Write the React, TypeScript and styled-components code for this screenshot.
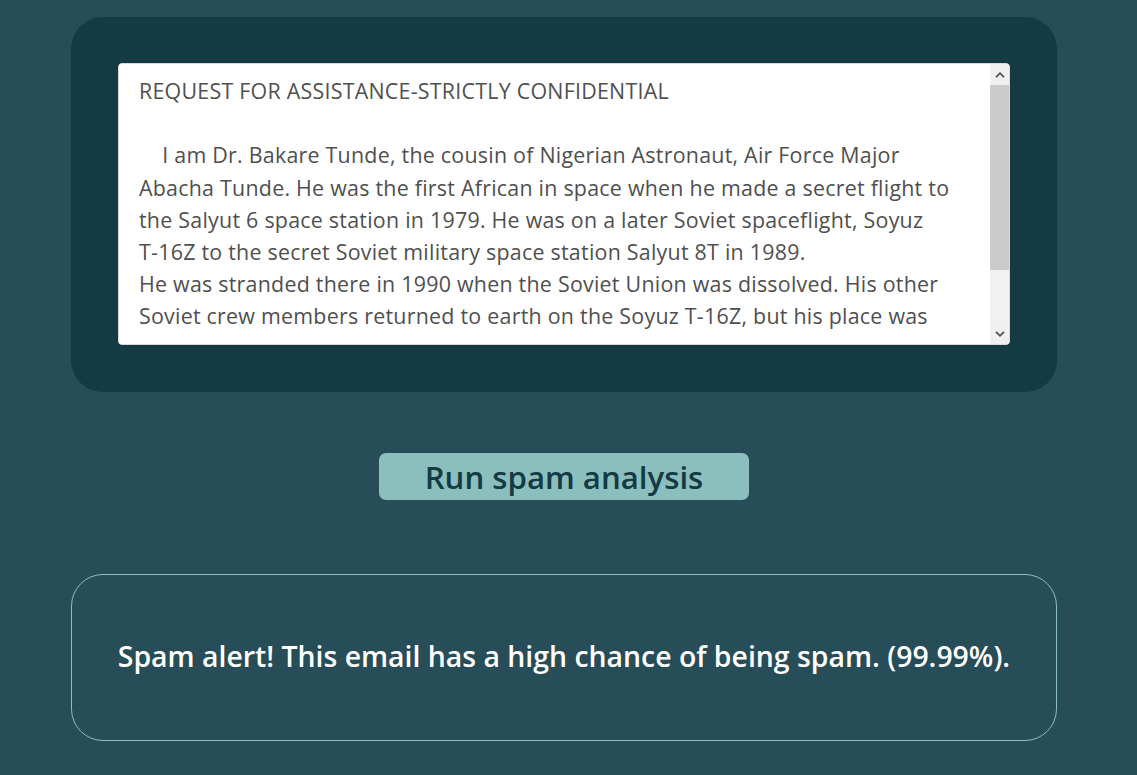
import React from "react";
import styled, { createGlobalStyle } from "styled-components";

const GlobalStyle = createGlobalStyle`
  html, body {
    margin: 0;
    padding: 0;
    background: #264d58;
  }
  body {
    font-family: "Open Sans", "Noto Sans", sans-serif;
  }
`;

const Page = styled.main`
  width: 986px;
  padding: 17px 0 34px 71px;
  display: flex;
  flex-direction: column;
  align-items: center;
`;

const InputPanel = styled.section`
  box-sizing: border-box;
  width: 100%;
  height: 375px;
  background: #143a43;
  border-radius: 32px;
  padding: 46px 47px 47px 47px;
  display: flex;
`;

const EditorFrame = styled.div`
  position: relative;
  width: 892px;
  height: 282px;

  &::after {
    content: "";
    position: absolute;
    left: 1px;
    right: 20px;
    bottom: 1px;
    height: 7px;
    background: #ffffff;
    border-bottom-left-radius: 3px;
    pointer-events: none;
  }
`;

const EmailArea = styled.textarea`
  box-sizing: border-box;
  display: block;
  width: 100%;
  height: 100%;
  resize: none;
  background: #ffffff;
  border: 1px solid #d9d9d9;
  border-radius: 4px;
  padding: 11px 41px 11px 20px;
  font-family: "Open Sans", "Noto Sans", sans-serif;
  font-size: 21.4px;
  letter-spacing: 0.25px;
  line-height: 32.2px;
  color: #4f4f4f;
  outline: none;
  overflow-y: hidden;
`;

const ScrollRail = styled.div`
  position: absolute;
  top: 1px;
  right: 1px;
  bottom: 1px;
  width: 19px;
  display: flex;
  flex-direction: column;
  background: #f1f1f1;
  border-top-right-radius: 3px;
  border-bottom-right-radius: 3px;
  overflow: hidden;
`;

const ScrollButton = styled.div`
  height: 21px;
  flex: none;
  display: flex;
  align-items: center;
  justify-content: center;
  background: #f0f0f0;
`;

const ScrollTrack = styled.div`
  flex: 1;
  display: flex;
  flex-direction: column;
`;

const ScrollThumb = styled.div`
  height: 185px;
  background: #cbcbcb;
`;

const Chevron = ({ up }: { up?: boolean }) => (
  <svg width="10" height="6" viewBox="0 0 10 6" aria-hidden="true">
    <path
      d={up ? "M1 5.2 L5 1.2 L9 5.2" : "M1 0.8 L5 4.8 L9 0.8"}
      fill="none"
      stroke="#505050"
      strokeWidth="1.7"
    />
  </svg>
);

const RunButton = styled.button`
  margin-top: 61px;
  width: 370px;
  height: 47px;
  border: none;
  border-radius: 7px;
  background: #8bbfbd;
  color: #143a43;
  font-family: "Open Sans", "Noto Sans", sans-serif;
  font-size: 31.2px;
  font-weight: 600;
  cursor: pointer;
  padding: 0;
`;

const ResultBox = styled.section`
  box-sizing: border-box;
  margin-top: 74px;
  width: 100%;
  height: 167px;
  border: 1px solid #8bbfbd;
  border-radius: 32px;
  display: flex;
  align-items: center;
  justify-content: center;
  padding-bottom: 4px;
`;

const ResultText = styled.p`
  margin: 0;
  color: #ffffff;
  font-family: "Open Sans", "Noto Sans", sans-serif;
  font-size: 28.4px;
  font-weight: 600;
`;

const WJ = "\u2060";

const EMAIL = `REQUEST FOR ASSISTANCE-STRICTLY CONFIDENTIAL

    I am Dr. Bakare Tunde, the cousin of Nigerian Astronaut, Air Force Major Abacha Tunde. He was the first African in space when he made a secret flight to the Salyut 6 space station in 1979. He was on a later Soviet spaceflight, Soyuz T-${WJ}16Z to the secret Soviet military space station Salyut 8T in 1989.
He was stranded there in 1990 when the Soviet Union was dissolved. His other Soviet crew members returned to earth on the Soyuz T-${WJ}16Z, but his place was occupied by return cargo. There have been occasional Progrez supply flights to keep him going since that time.`;

export default function App() {
  return (
    <>
      <GlobalStyle />
      <Page>
        <InputPanel>
          <EditorFrame>
            <EmailArea defaultValue={EMAIL} spellCheck={false} />
            <ScrollRail aria-hidden="true">
              <ScrollButton>
                <Chevron up />
              </ScrollButton>
              <ScrollTrack>
                <ScrollThumb />
              </ScrollTrack>
              <ScrollButton>
                <Chevron />
              </ScrollButton>
            </ScrollRail>
          </EditorFrame>
        </InputPanel>
        <RunButton type="button">Run spam analysis</RunButton>
        <ResultBox>
          <ResultText>
            Spam alert! This email has a high chance of being spam. (99.99%).
          </ResultText>
        </ResultBox>
      </Page>
    </>
  );
}
